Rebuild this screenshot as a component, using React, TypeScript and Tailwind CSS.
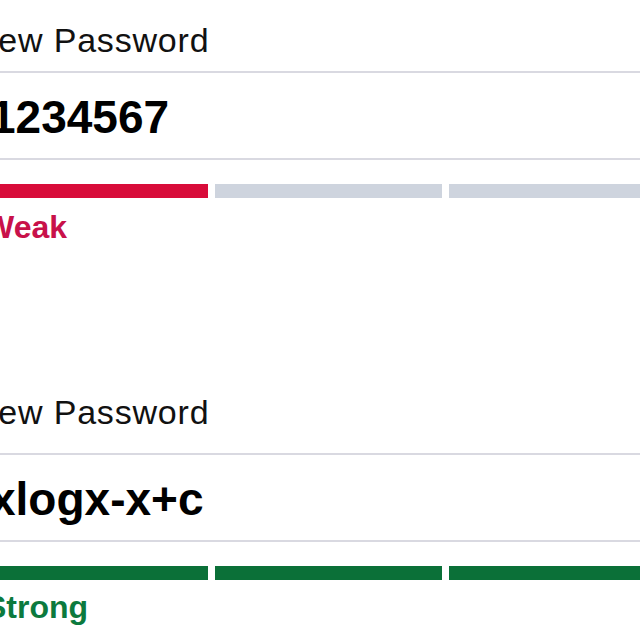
import React from "react";

type Props = {
  value: string;
  level: number;
  label: string;
  strong: boolean;
};

function Field({ value, level, label, strong }: Props) {
  const bars = [0, 1, 2, 3];
  return (
    <div className="ml-[-19px] w-[920px]">
      <div
        className={
          strong
            ? "h-[72px] pt-[14px] text-[34px] leading-[34px] tracking-[0.8px] text-[#111] ml-[-8px]"
            : "h-[71px] pt-[23px] text-[34px] leading-[34px] tracking-[0.8px] text-[#111] ml-[-8px]"
        }
      >
        New Password
      </div>
      <div className="h-[2px] bg-[#d9d9e1]" />
      <div className="pt-[21px] pb-[18px]">
        <div className="h-[46px] text-[46px] leading-[46px] font-bold text-black ml-[9px]">{value}</div>
      </div>
      <div className="h-[2px] bg-[#d9d9e1]" />
      <div className="mt-[24px] flex gap-[7px]">
        {bars.map((b) => (
          <div
            key={b}
            className={
              b < level
                ? strong
                  ? "h-[14px] w-[227px] shrink-0 bg-[#0b7038]"
                  : "h-[14px] w-[227px] shrink-0 bg-[#d80c3a]"
                : "h-[14px] w-[227px] shrink-0 bg-[#ced4de]"
            }
          />
        ))}
      </div>
      <div
        className={
          strong
            ? "mt-[11px] h-[32px] text-[32px] leading-[32px] font-bold text-[#0c7a3e] ml-[4px]"
            : "mt-[13px] h-[32px] text-[32px] leading-[32px] font-bold text-[#c8114a] ml-[3px]"
        }
      >
        {label}
      </div>
    </div>
  );
}

export default function App() {
  return (
    <div
      className="w-[640px] h-[640px] overflow-hidden bg-white"
      style={{ fontFamily: '"Liberation Sans", Arial, sans-serif' }}
    >
      <Field value="1234567" level={1} label="Weak" strong={false} />
      <div className="h-[138px]" />
      <Field value="xlogx-x+c" level={4} label="Strong" strong={true} />
    </div>
  );
}
